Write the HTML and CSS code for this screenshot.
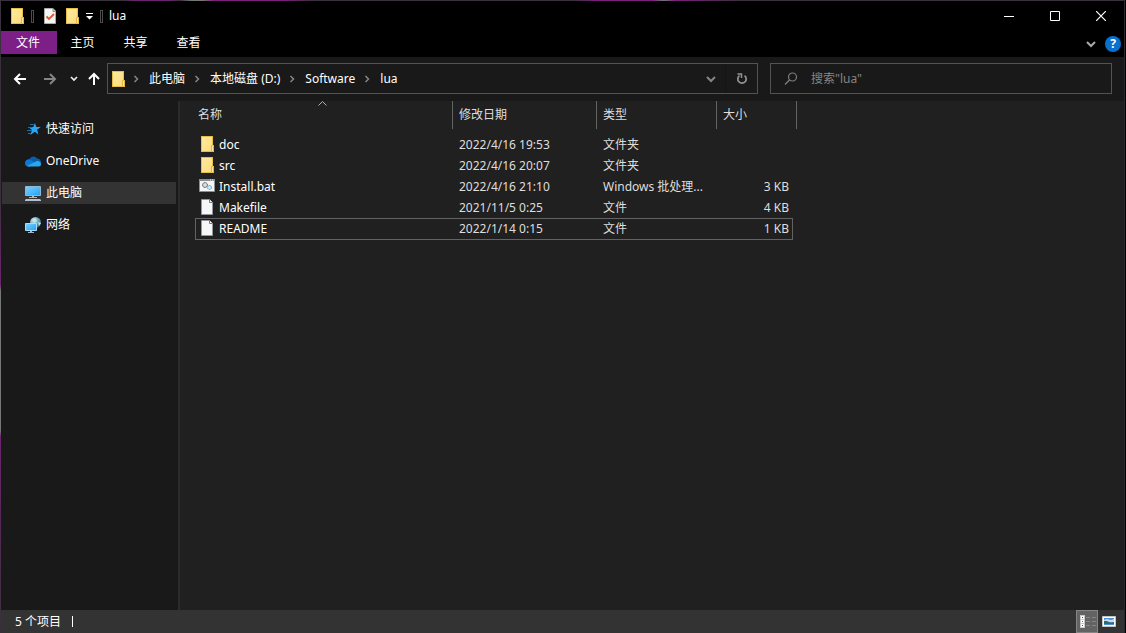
FILE: index.html
```html
<!DOCTYPE html>
<html lang="zh-CN">
<head>
<meta charset="utf-8">
<title>lua</title>
<link rel="stylesheet" href="styles.css">
</head>
<body>
<svg class="defs" aria-hidden="true">
  <defs>
    <linearGradient id="gold" x1="0" y1="0" x2="1" y2="1"><stop offset="0" stop-color="#ffe9a0"/><stop offset="1" stop-color="#fddc7c"/></linearGradient>
    <linearGradient id="screen" x1="0" y1="0" x2="1" y2="1"><stop offset="0" stop-color="#7fd0ff"/><stop offset="1" stop-color="#1fa2f5"/></linearGradient>
    <radialGradient id="globe" cx=".35" cy=".3" r=".8"><stop offset="0" stop-color="#d8f1f5"/><stop offset=".5" stop-color="#6fa9ba"/><stop offset="1" stop-color="#2b5a6e"/></radialGradient>
    <symbol id="folder" viewBox="0 0 16 16">
      <path d="M2 0h12v9h1v7H2z" fill="#e8bd45"/>
      <path d="M3 1h10v14H3z" fill="url(#gold)"/>
      <path d="M12.500 9.500h2v6h-2z" fill="#ffe9a0" stroke="#e3b840"/>
    </symbol>
    <symbol id="file" viewBox="0 0 16 16">
      <path d="M2.500.5h8l3 3v12h-11z" fill="#f6f7f8" stroke="#96979a"/>
      <path d="M10.500.5v3h3" fill="#fff" stroke="#77797c"/>
    </symbol>
    <symbol id="crumb" viewBox="0 0 8 8"><path d="M2.500 1l3 3-3 3" fill="none" stroke="#858585" stroke-width="1.500"/></symbol>
    <symbol id="down" viewBox="0 0 10 8"><path d="M1 2l4 4 4-4" fill="none" stroke="currentColor" stroke-width="2"/></symbol>
  </defs>
</svg>
<div class="window">
  <header class="titlebar">
    <div class="quick">
      <svg class="icon16"><use href="#folder"/></svg>
      <span class="grip"></span>
      <button class="bare" aria-label="属性"><svg class="icon16" viewBox="0 0 16 16"><path d="M2.500.5h8.500l2.500 2.500v12.500h-11z" fill="#f5f5f5" stroke="#aaa"/><path d="M11 .5v3h2.500" fill="none" stroke="#888"/><path d="M4.500 8.500l2.500 2.500 5-5" fill="none" stroke="#e5532b" stroke-width="1.800"/></svg></button>
      <button class="bare" aria-label="新建文件夹"><svg class="icon16"><use href="#folder"/></svg></button>
      <button class="bare customize" aria-label="自定义快速访问工具栏"><svg width="7" height="7" viewBox="0 0 7 7"><path d="M0 0h7v1H0zM0 3h7L3.500 6.500z" fill="#fff"/></svg></button>
      <span class="grip"></span>
      <span class="title">lua</span>
    </div>
    <div class="controls">
      <button class="bare" aria-label="最小化"><svg width="10" height="10"><path d="M0 5.500h10" stroke="#fff"/></svg></button>
      <button class="bare" aria-label="最大化"><svg width="10" height="10"><path d="M.5.5h9v9h-9z" fill="none" stroke="#fff"/></svg></button>
      <button class="bare" aria-label="关闭"><svg width="10" height="10"><path d="M0 0l10 10M10 0L0 10" stroke="#fff" stroke-width="1.200"/></svg></button>
    </div>
  </header>
  <nav class="ribbon">
    <button class="tab file-tab">文件</button>
    <button class="tab">主页</button>
    <button class="tab">共享</button>
    <button class="tab">查看</button>
    <div class="ribbon-end">
      <button class="bare expand" aria-label="展开功能区"><svg width="10" height="8"><use href="#down"/></svg></button>
      <button class="bare help" aria-label="帮助">?</button>
    </div>
  </nav>
  <div class="navbar">
    <div class="history">
      <button class="bare" aria-label="后退"><svg width="14" height="12" viewBox="0 0 14 12"><path d="M13 6H2M7 1L2 6l5 5" fill="none" stroke="#fff" stroke-width="2"/></svg></button>
      <button class="bare" aria-label="前进"><svg width="14" height="12" viewBox="0 0 14 12"><path d="M1 6h11M7 1l5 5-5 5" fill="none" stroke="#858585" stroke-width="2"/></svg></button>
      <button class="bare recent" aria-label="最近浏览的位置"><svg width="8" height="6" viewBox="0 0 8 6"><path d="M1 1l3 3 3-3" fill="none" stroke="#eee" stroke-width="1.700"/></svg></button>
      <button class="bare up" aria-label="上移"><svg width="12" height="14" viewBox="0 0 12 14"><path d="M6 13V2M1 7l5-5 5 5" fill="none" stroke="#fff" stroke-width="2"/></svg></button>
    </div>
    <div class="address">
      <svg class="icon16"><use href="#folder"/></svg>
      <svg class="crumb"><use href="#crumb"/></svg>
      <a href="#">此电脑</a>
      <svg class="crumb"><use href="#crumb"/></svg>
      <a href="#">本地磁盘 (D:)</a>
      <svg class="crumb"><use href="#crumb"/></svg>
      <a href="#">Software</a>
      <svg class="crumb"><use href="#crumb"/></svg>
      <a href="#">lua</a>
      <button class="bare previous" aria-label="以前的位置"><svg width="10" height="8"><use href="#down"/></svg></button>
      <button class="bare refresh" aria-label="刷新"><svg width="12" height="12" viewBox="0 0 12 12"><path d="M8.500 2.600A4.200 4.200 0 1 1 3.500 2.600" fill="none" stroke="#949494" stroke-width="1.700"/><path d="M1.500 1h4v4" fill="none" stroke="#949494" stroke-width="1.500"/></svg></button>
    </div>
    <label class="search">
      <svg width="14" height="14" viewBox="0 0 14 14"><circle cx="8.500" cy="5" r="4" fill="none" stroke="#7d7d7d" stroke-width="1.200"/><path d="M5.700 7.800L1 12.500" stroke="#7d7d7d" stroke-width="1.300"/></svg>
      <input type="text" placeholder='搜索"lua"' aria-label="搜索">
    </label>
  </div>
  <div class="body">
    <aside class="sidebar">
      <a href="#"><svg class="icon16" viewBox="0 0 16 16"><path d="M10 2l1.300 4 4.400.1-3.600 2.600 1.300 4.700-3.600-2.600L5.400 14l1.600-4.900L4 6.600l4.300-.5z" fill="#2ba5f5"/><path d="M5 3.500h4M3 6.500h4M2 9.500h5M3 12.500h3" stroke="#1374b9"/></svg>快速访问</a>
      <a href="#"><svg class="icon16" viewBox="0 0 16 16"><path d="M4 7a4.500 4.500 0 0 1 8-1.500A4 4 0 0 1 16 10H1z" fill="#0b5cab"/><path d="M0 10a3.700 3.700 0 0 1 5-3.500l6 3.500-6 3.500H3.500A3.500 3.500 0 0 1 0 10z" fill="#0f78d4"/><path d="M2 13l8-4c1.500-2 6-1 6 2a2.500 2.500 0 0 1-2.500 2.500h-10z" fill="#28a8ea"/></svg>OneDrive</a>
      <a href="#" class="selected"><svg class="icon16" viewBox="0 0 16 16"><path d="M.5 1.500h15v9H.5z" fill="url(#screen)" stroke="#8fb9d3"/><path d="M7 11h2v1H7zM4 12h8v1H4z" fill="#a9bccb"/><path d="M1 14h14l1 1v1H0v-1z" fill="#b4c0d0"/></svg>此电脑</a>
      <a href="#"><svg class="icon16" viewBox="0 0 16 16"><circle cx="10.500" cy="5.500" r="5.500" fill="url(#globe)"/><path d="M8 1l3 1 1 2-3 2zM13 5l3 1-2 3z" fill="#bfe3e8"/><path d="M.5 6.500h11v7H.5z" fill="url(#screen)" stroke="#a9dcfb"/><path d="M5 14h2v1H5zM3 15h6v1H3z" fill="#9fb7c8"/></svg>网络</a>
    </aside>
    <main class="files">
      <table>
        <colgroup><col class="c-name"><col class="c-date"><col class="c-type"><col class="c-size"></colgroup>
        <thead><tr>
          <th>名称<svg class="sort" width="9" height="5" viewBox="0 0 9 5"><path d="M.5 4.500l4-4 4 4" fill="none" stroke="#b0b0b0"/></svg></th>
          <th>修改日期</th><th>类型</th><th>大小</th>
        </tr></thead>
        <tbody>
          <tr><td><span class="name"><svg class="icon16"><use href="#folder"/></svg>doc</span></td><td>2022/4/16 19:53</td><td>文件夹</td><td></td></tr>
          <tr><td><span class="name"><svg class="icon16"><use href="#folder"/></svg>src</span></td><td>2022/4/16 20:07</td><td>文件夹</td><td></td></tr>
          <tr><td><span class="name"><svg class="icon16" viewBox="0 0 16 16"><path d="M.5 1.500h15v12H.5z" fill="#f4f5f6" stroke="#8c8f92"/><path d="M0 1h16v2H0z" fill="#8c8f92"/><path d="M11 2h1m1 0h1" stroke="#eee"/><circle cx="6" cy="7" r="2.500" fill="#c5cacd" stroke="#646a70" stroke-dasharray="1.500 .5"/><circle cx="6" cy="7" r=".8" fill="#fff"/><circle cx="10.500" cy="9.500" r="2" fill="#cfe6f5" stroke="#5c9cc4" stroke-dasharray="1.500 .5"/></svg>Install.bat</span></td><td>2022/4/16 21:10</td><td>Windows 批处理...</td><td>3 KB</td></tr>
          <tr><td><span class="name"><svg class="icon16"><use href="#file"/></svg>Makefile</span></td><td>2021/11/5 0:25</td><td>文件</td><td>4 KB</td></tr>
          <tr class="focused"><td><span class="name"><svg class="icon16"><use href="#file"/></svg>README</span></td><td>2022/1/14 0:15</td><td>文件</td><td>1 KB</td></tr>
        </tbody>
      </table>
    </main>
  </div>
  <footer class="status">
    <span class="count">5 个项目</span><span class="caret"></span>
    <div class="views">
      <button class="bare active" aria-label="详细信息"><svg width="18" height="15" viewBox="0 0 18 15"><path d="M2 1h5v13H2z" fill="#c9c9c9"/><path d="M3 2h3v3H3zM3 6h3v3H3zM3 10h3v3H3z" fill="#fff"/><path d="M4 3h1v1H4z" fill="#444"/><path d="M4 7h1v1H4z" fill="#2888e0"/><path d="M4 11h1v1H4z" fill="#c02030"/><path d="M8 3.500h4m2 0h4M8 7.500h4m2 0h4M8 11.500h4m2 0h4" stroke="#858585"/></svg></button>
      <button class="bare" aria-label="大缩略图"><svg width="14" height="11" viewBox="0 0 14 11"><path d="M.5.5h13v10H.5z" fill="#fff" stroke="#c5c5c5"/><path d="M2 2h10v7H2z" fill="#4e91d2"/><path d="M2 4l3-1 4 1 3-1v3H2z" fill="#c3ddf3"/><path d="M2 5l3 0 4 2 3-1v2H2z" fill="#356b62"/></svg></button>
    </div>
  </footer>
</div>
</body>
</html>
```
FILE: styles.css
```css
* { box-sizing: border-box; }
body {
  margin: 0;
  background: #000;
  color: #fff;
  font: 12px/16px "Noto Sans", "Noto Sans CJK SC", sans-serif;
}
button, input { font: inherit; color: inherit; }
a { color: inherit; text-decoration: none; }
svg { display: block; flex: none; }
.defs { position: absolute; width: 0; height: 0; }
.icon16 { width: 16px; height: 16px; }
.bare {
  display: flex;
  align-items: center;
  justify-content: center;
  padding: 0;
  border: 0;
  background: none;
}

.window {
  display: flex;
  flex-direction: column;
  min-height: 100vh;
  margin-right: 1px;
  padding: 1px 1px 0;
  background:
    linear-gradient(90deg, #38303a 11%, #6d246d 12% 15%, #38303a 16%, #777 17% 18%, #7c1f7c 19% 25%, #38303a 28% 51%, #7c1f7c 53% 58%, #777 59%, #7c1f7c 60%, #38303a 66%) top / 100% 1px no-repeat,
    linear-gradient(#38303a 30%, #6d246d 45%, #777 46% 68%, #6d246d 69%, #38303a 100%) left / 1px 100% no-repeat,
    #2e2930;
}
.titlebar, .ribbon { background: #000; }

.titlebar { display: flex; justify-content: space-between; height: 30px; }
.quick { display: flex; align-items: center; padding-left: 8px; }
.grip { width: 3px; height: 13px; margin: 0 8px 0 6px; border: 1px solid #4d4d4d; }
.quick .bare + .bare { margin-left: 6px; }
.quick .customize + .grip { margin: 0 6px 0 7px; }
.controls { display: flex; }
.controls .bare { width: 46px; }

.ribbon { display: flex; height: 26px; padding-bottom: 3px; }
.tab { width: 53px; padding: 1px 2px 0 0; border: 0; background: none; }
.file-tab { width: 56px; background: #7c1f87; }
.ribbon-end { display: flex; align-items: center; gap: 9px; margin-left: auto; padding: 3px 3px 0 0; }
.expand { color: #aaa; }
.help { width: 16px; height: 16px; border-radius: 50%; background: #0a70d0; font-weight: 700; }

.navbar {
  display: grid;
  grid-template-columns: 99px minmax(0, 651fr) 12px minmax(0, 342fr);
  height: 44px;
  padding: 6px 12px 7px 7px;
  background: #191919;
}
.history { display: flex; align-items: center; gap: 6px; }
.history .bare { width: 24px; height: 24px; }
.history .recent { width: 11px; }
.history .up { width: 18px; }
.address, .search { display: flex; align-items: center; min-width: 0; border: 1px solid #535353; }
.address { padding-left: 2px; }
.address a { white-space: nowrap; }
.crumb { width: 8px; height: 8px; margin: 0 9px 0 8px; }
.address .icon16 + .crumb { margin-left: 6px; }
.previous { width: 28px; margin-left: auto; color: #858585; align-self: stretch; }
.refresh { width: 32px; align-self: stretch; border-left: 1px solid #151515; }
.search { grid-column: 4; padding-left: 13px; gap: 13px; }
.search input { flex: 1; min-width: 0; padding: 0; border: 0; outline: 0; background: none; }
.search input::placeholder { color: #858585; opacity: 1; }

.body { display: flex; flex: 1; }
.sidebar {
  display: flex;
  flex-direction: column;
  gap: 10px;
  width: 179px;
  flex: none;
  padding: 17px 2px 0 1px;
  border-right: 2px solid #2b2b2b;
  background: #191919;
}
.sidebar a { display: flex; align-items: center; gap: 5px; height: 22px; padding-left: 23px; }
.sidebar .selected { background: #333; }

.files { flex: 1; min-width: 0; padding-left: 12px; background: #202020; }
table { border-collapse: separate; border-spacing: 0; table-layout: fixed; width: 605px; }
.c-name { width: 261px; }
.c-date { width: 144px; }
.c-type { width: 120px; }
.c-size { width: 80px; }
th {
  position: relative;
  height: 28px;
  padding: 0 6px;
  border-right: 1px solid #636363;
  color: #dedede;
  font-weight: 400;
  text-align: left;
}
.sort { position: absolute; top: 0; left: 50%; margin-left: -4px; }
tbody::before { content: ""; display: table-row; height: 5px; }
td { height: 21px; padding: 0 6px; color: #dedede; white-space: nowrap; }
td:first-child { color: #fff; }
td:last-child { padding-right: 8px; text-align: right; }
.name { display: flex; align-items: center; gap: 4px; padding-left: 1px; }
.name svg { margin-bottom: 1px; }
.focused { position: relative; }
.focused::after { content: ""; position: absolute; inset: 0 4px -1px 3px; border: 1px solid #636363; }

.status { display: flex; align-items: center; height: 23px; padding-left: 14px; background: #333; }
.caret { width: 1px; height: 11px; margin-left: 11px; background: #fff; }
.views { display: flex; align-self: stretch; margin-left: auto; padding-right: 4px; }
.views .bare { width: 22px; }
.views .active { border: 1px solid #858585; background: #636363; }
```
